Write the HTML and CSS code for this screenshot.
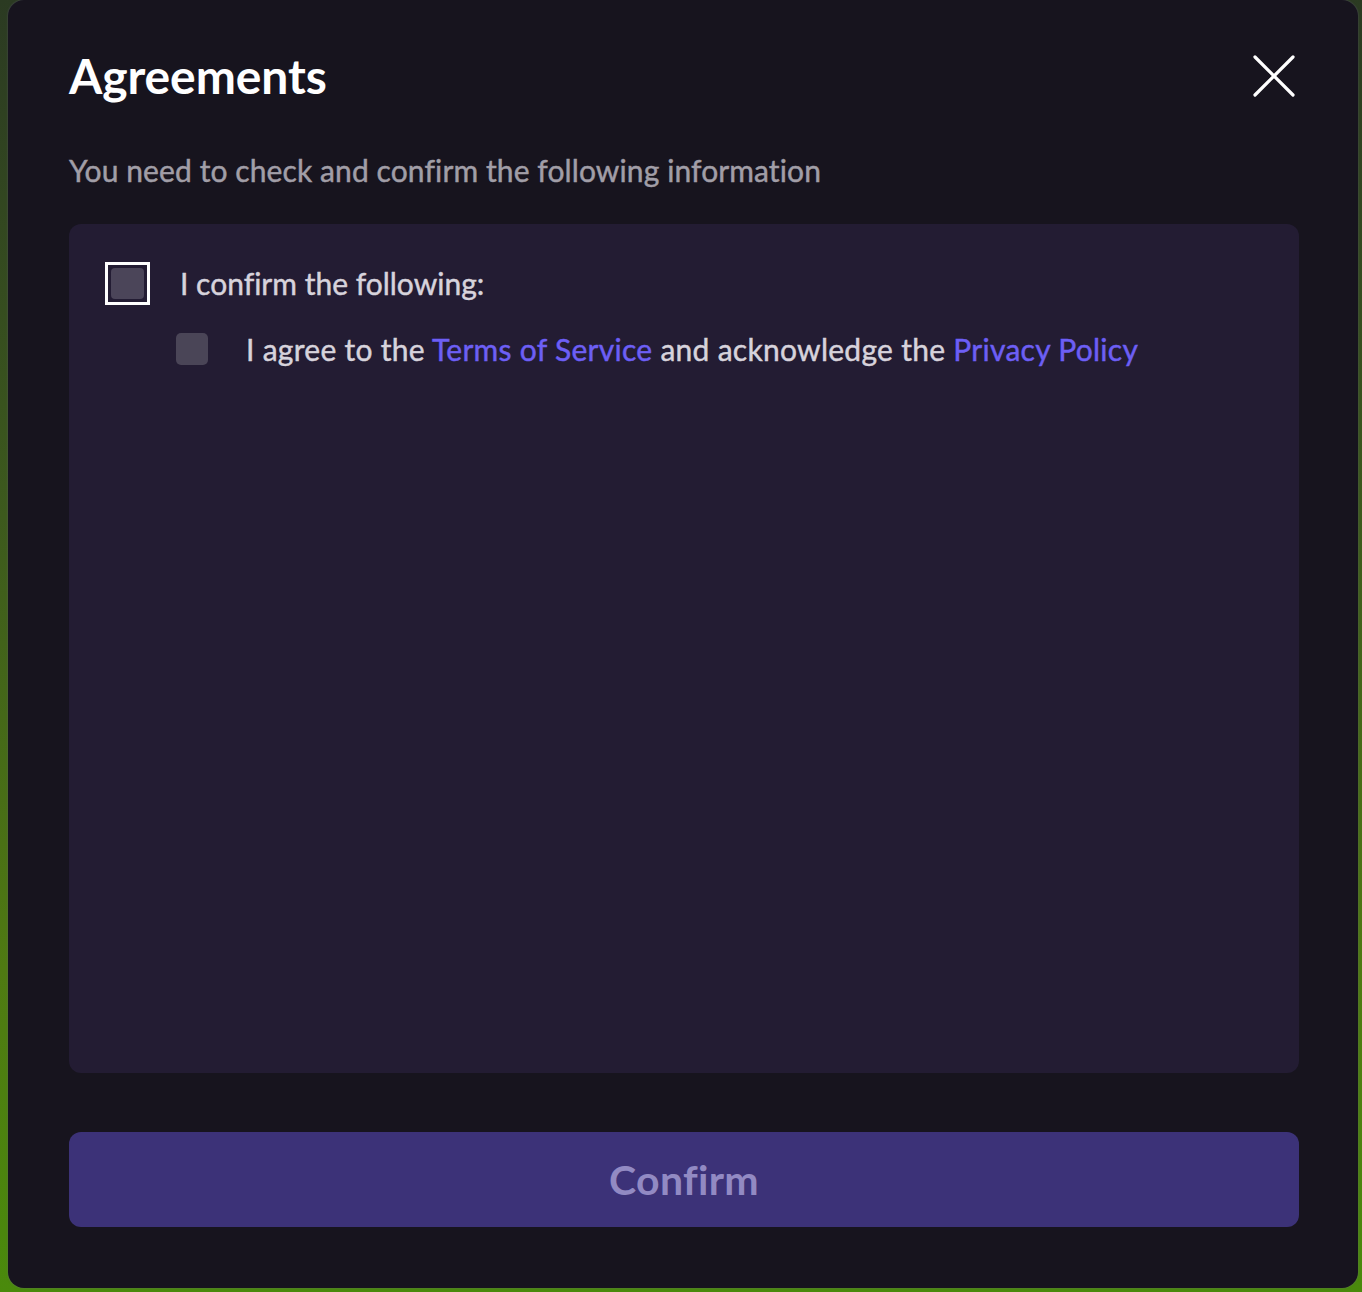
FILE: index.html
```html
<!DOCTYPE html>
<html lang="en">
<head>
<meta charset="utf-8">
<title>Agreements</title>
<link rel="stylesheet" href="styles.css">
</head>
<body>
<div class="backdrop">
  <div class="modal">
    <div class="header">
      <h1 class="title">Agreements</h1>
      <button class="close" aria-label="Close">
        <svg width="42" height="42" viewBox="0 0 42 42"><path d="M2 2 L40 40 M40 2 L2 40" stroke="#fff" stroke-width="3.2" stroke-linecap="round" fill="none"/></svg>
      </button>
    </div>
    <p class="subtitle">You need to check and confirm the following information</p>
    <div class="panel">
      <label class="row main">
        <span class="box big"></span>
        <span class="label">I confirm the following:</span>
      </label>
      <label class="row sub">
        <span class="box small"></span>
        <span class="label">I agree to the <a class="link">Terms of Service</a> and acknowledge the <a class="link">Privacy Policy</a></span>
      </label>
    </div>
    <button class="confirm">Confirm</button>
  </div>
</div>
</body>
</html>
```

FILE: styles.css
```css
html, body {
  margin: 0;
  padding: 0;
}
body {
  width: 1362px;
  height: 1292px;
  overflow: hidden;
  background: linear-gradient(180deg, #2b3a22 0%, #3d5a1d 40%, #4f7a12 75%, #4a8a0c 100%);
  font-family: "Lato", "Noto Sans", sans-serif;
  font-variant-ligatures: none;
}
.backdrop {
  height: 1292px;
  padding-left: 8px;
  box-sizing: border-box;
}
.modal {
  width: 1350px;
  height: 1288px;
  box-sizing: border-box;
  background: #17141e;
  border-radius: 16px;
  box-shadow: 0 0 2px rgba(110, 100, 140, 0.6);
  padding: 47px 59px 61px 61px;
  display: flex;
  flex-direction: column;
}
.header {
  display: flex;
  align-items: center;
  justify-content: space-between;
  height: 58px;
}
.title {
  margin: 0;
  font-size: 48px;
  font-weight: 700;
  color: #ffffff;
  line-height: 58px;
  letter-spacing: -0.1px;
}
.close {
  background: none;
  border: 0;
  padding: 0;
  width: 42px;
  height: 42px;
  margin-right: 4px;
  display: flex;
}
.subtitle {
  margin: 47px 0 0 0;
  font-size: 30px;
  font-weight: 400;
  line-height: 36px;
  color: #a19ea7;
  letter-spacing: 0.1px;
  -webkit-text-stroke: 0.45px currentColor;
}
.panel {
  margin-top: 36px;
  flex: 1;
  background: #231c33;
  border-radius: 12px;
  padding: 37px 36px;
  display: flex;
  flex-direction: column;
}
.row {
  display: flex;
  align-items: center;
  color: #d7d3dc;
  font-size: 30px;
  font-weight: 400;
  -webkit-text-stroke: 0.45px currentColor;
}
.main {
  height: 44px;
}
.sub {
  margin-top: 22px;
  padding-left: 71px;
  height: 44px;
  letter-spacing: 0.28px;
}
.box {
  display: block;
  box-sizing: border-box;
  flex: none;
}
.big {
  width: 45px;
  height: 43px;
  border: 3px solid #ffffff;
  background: #231c33;
  padding: 3px;
}
.big::after {
  content: "";
  display: block;
  width: 100%;
  height: 100%;
  background: #4b4559;
  border-radius: 4px;
}
.main .label {
  margin-left: 30px;
}
.small {
  width: 32px;
  height: 32px;
  background: #4a4557;
  border-radius: 5px;
}
.sub .label {
  margin-left: 38px;
}
.link {
  color: #6d5ff5;
  text-decoration: none;
}
.confirm {
  margin-top: 59px;
  height: 95px;
  border: 0;
  border-radius: 12px;
  background: #3c3278;
  color: #928ac3;
  font-family: "Lato", "Noto Sans", sans-serif;
  font-variant-ligatures: none;
  font-size: 41px;
  font-weight: 700;
  letter-spacing: 0.3px;
  width: 1230px;
}
```
